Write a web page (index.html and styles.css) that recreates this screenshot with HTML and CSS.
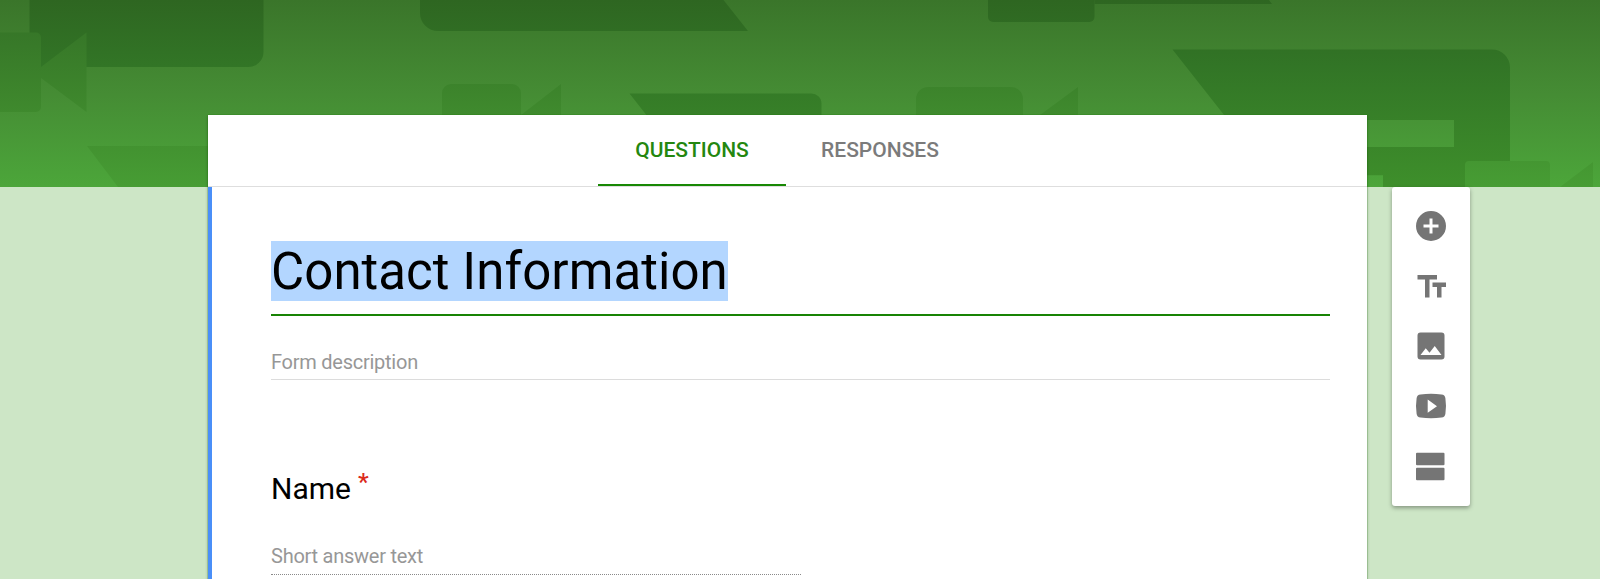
FILE: index.html
```html
<!DOCTYPE html>
<html lang="en">
<head>
<meta charset="utf-8">
<title>Contact Information</title>
<link rel="stylesheet" href="styles.css">
</head>
<body>
<div class="page">
  <svg class="banner" width="1600" height="187" viewBox="0 0 1600 187" aria-hidden="true">
    <defs>
      <linearGradient id="base" gradientUnits="userSpaceOnUse" x1="0" y1="0" x2="0" y2="187">
        <stop offset="0" stop-color="#3a752a"/><stop offset=".5" stop-color="#458c34"/><stop offset="1" stop-color="#4ca63a"/>
      </linearGradient>
      <linearGradient id="dark" gradientUnits="userSpaceOnUse" x1="0" y1="0" x2="0" y2="187">
        <stop offset="0" stop-color="#2e6621"/><stop offset=".35" stop-color="#327526"/><stop offset="1" stop-color="#3e8f2b"/>
      </linearGradient>
      <linearGradient id="mid" gradientUnits="userSpaceOnUse" x1="0" y1="0" x2="0" y2="187">
        <stop offset="0" stop-color="#336f26"/><stop offset=".5" stop-color="#3d852c"/><stop offset="1" stop-color="#479d34"/>
      </linearGradient>
    </defs>
    <rect width="1600" height="187" fill="url(#base)"/>
    <g fill="url(#dark)">
      <path d="M29.500 0H263.500V52a15 15 0 0 1-15 15H29.500z"/>
      <path d="M420 0H723.500L748 31H438a18 18 0 0 1-18-18z"/>
      <path d="M988 0h106.500v17a5 5 0 0 1-5 5H993a5 5 0 0 1-5-5z"/>
      <path d="M1094.500 0H1269l3 4H1094.500z"/>
      <path d="M629.500 93.500H811a10 10 0 0 1 10.500 10v20H653z"/>
      <path d="M1172.500 49.500H1492a18 18 0 0 1 18 18V187H1383V175.500H1360V147h94V120H1228z"/>
    </g>
    <g fill="url(#mid)">
      <path d="M0 32.500H36a5 5 0 0 1 5 5V67l45.500-34.500V112L41 78v29a5 5 0 0 1-5 5H0z"/>
      <path d="M87 146H210v41H118z"/>
      <path d="M442 120V93a9 9 0 0 1 9-9h61a9 9 0 0 1 9 9v27zM521 115l40-31v36h-40z"/>
      <path d="M916 120V99a12 12 0 0 1 12-12h83a12 12 0 0 1 12 12v21zM1040 115l38-28v33h-38z"/>
      <path d="M1465 187V165a4 4 0 0 1 4-4h77a4 4 0 0 1 4 4v22zM1560 187l33-25v25z"/>
    </g>
    <path fill="url(#base)" d="M1360 120h94v27h-94zM1360 175.500h23V187h-23z"/>
  </svg>

  <main class="form">
    <nav class="tabs">
      <div class="tab tab-active"><span>QUESTIONS</span></div>
      <div class="tab"><span>RESPONSES</span></div>
    </nav>
    <section class="body">
      <div class="title-field"><span class="title">Contact Information</span></div>
      <div class="description">Form description</div>
      <div class="question">Name<span class="required">*</span></div>
      <div class="answer">Short answer text</div>
    </section>
  </main>

  <aside class="toolbar">
    <svg viewBox="0 0 24 24"><path d="M12 2a10 10 0 1 0 0 20 10 10 0 0 0 0-20zm5 11h-4v4h-2v-4H7v-2h4V7h2v4h4z"/></svg>
    <svg viewBox="0 0 24 24"><path d="M3 4.700v3h5v12h3v-12h5v-3zM22 9.700h-9v3h3v7h3v-7h3z"/></svg>
    <svg viewBox="0 0 24 24"><path d="M21 19V5a2 2 0 0 0-2-2H5a2 2 0 0 0-2 2v14a2 2 0 0 0 2 2h14a2 2 0 0 0 2-2zM8.500 13.500l2.500 3 3.500-4.500 4.500 6H5z"/></svg>
    <svg viewBox="0 0 24 24"><path d="M5 4.300q7-.8 14 0 2.300.2 2.600 2.500.8 5.200 0 10.400-.3 2.300-2.600 2.500-7 .8-14 0-2.300-.2-2.600-2.500-.8-5.200 0-10.400Q2.700 4.500 5 4.300zM9.800 7.700v8.800l6.200-4.400z"/></svg>
    <svg viewBox="0 0 24 24"><path d="M2.700 3.100h17.600q.7 0 .7.700v7q0 .7-.7.700H2.700q-.7 0-.7-.7v-7q0-.7.700-.7zM2.700 13.100h17.600q.7 0 .7.700v7q0 .7-.7.700H2.700q-.7 0-.7-.7v-7q0-.7.700-.7z"/></svg>
  </aside>
</div>
</body>
</html>
```
FILE: styles.css
```css
* { box-sizing: border-box; }

body {
  margin: 0;
  font-family: Roboto, "Liberation Sans", sans-serif;
  background: #cde6c6;
}

.page {
  position: relative;
  display: flex;
  align-items: flex-start;
  height: 579px;
  padding: 115px 0 0 208px;
  overflow: hidden;
}

.banner {
  position: absolute;
  top: 0;
  left: 0;
  display: block;
}

.form {
  position: relative;
  width: 1159px;
  height: 480px;
  background: #fff;
  box-shadow: 0 0 1px #188000, 0 2px 3px rgba(0, 0, 0, .3);
}

.tabs {
  display: flex;
  justify-content: center;
  height: 72px;
  padding-right: 3px;
  border-bottom: 1px solid #dedede;
}

.tab {
  display: flex;
  justify-content: center;
  width: 188px;
  height: 71px;
  padding-top: 20px;
  color: #7b7b7b;
  font-size: 21px;
  font-weight: 500;
  line-height: 30px;
}

.tab-active {
  color: #24870f;
  border-bottom: 2px solid #188804;
}

.body {
  height: 408px;
  padding: 54px 37px 0 59px;
  border-left: 4px solid #4a8ff8;
}

.title-field {
  height: 75px;
  border-bottom: 2px solid #188304;
}

.title {
  display: inline-block;
  height: 60px;
  background: #b3d6ff;
  color: #000;
  font-size: 51px;
  letter-spacing: .05px;
  line-height: 62px;
  white-space: nowrap;
}

.description {
  height: 64px;
  padding-top: 34px;
  border-bottom: 1px solid #dcdcdc;
  color: #979797;
  font-size: 20px;
  letter-spacing: -.25px;
  line-height: 24px;
}

.question {
  display: flex;
  gap: 7px;
  margin-top: 91px;
  height: 36px;
  color: #000;
  font-size: 30px;
  line-height: 36px;
}

.required {
  color: #db2b1a;
  font-size: 24px;
  font-weight: 500;
  line-height: 22px;
}

.answer {
  width: 530px;
  height: 49px;
  margin-top: 19px;
  padding-top: 18px;
  border-bottom: 1px dotted #8a8a8a;
  color: #979797;
  font-size: 20px;
  letter-spacing: -.25px;
  line-height: 24px;
}

.toolbar {
  position: relative;
  display: flex;
  flex-direction: column;
  align-items: center;
  gap: 24.200px;
  width: 78px;
  height: 319px;
  margin: 72px 0 0 25px;
  padding-top: 20.500px;
  border-radius: 3px;
  background: #fff;
  box-shadow: 0 2px 4px rgba(0, 0, 0, .35);
}

.toolbar svg {
  width: 36px;
  height: 36px;
  flex: none;
  fill: #757575;
}
```
